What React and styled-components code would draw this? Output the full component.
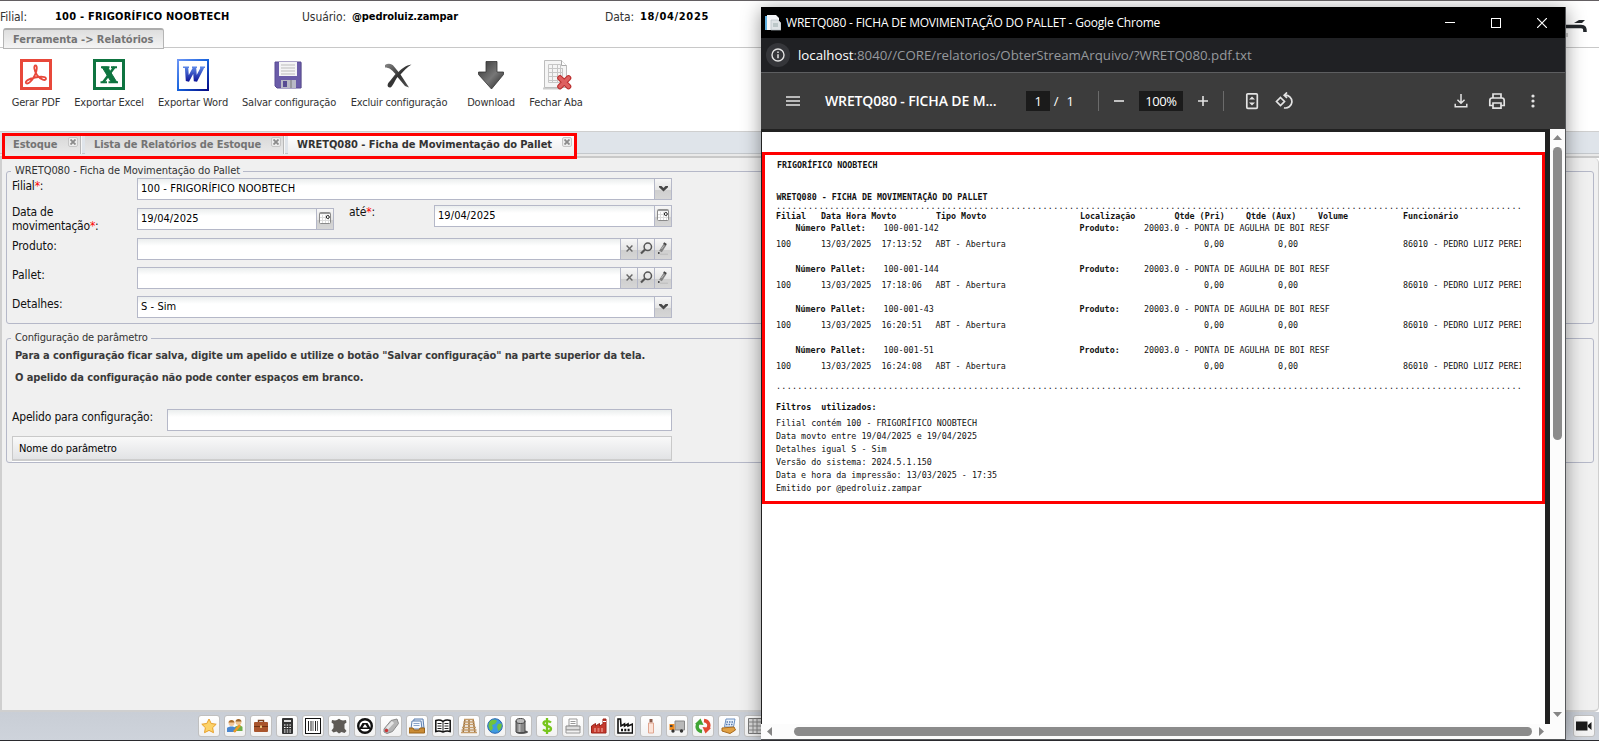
import React from 'react';
import styled, { createGlobalStyle, css } from 'styled-components';

const GlobalStyle = createGlobalStyle`
  * { box-sizing: border-box; }
  body { margin: 0; background: #fff; overflow: hidden; }
  svg { display: block; flex: none; }
`;

const ui = '"DejaVu Sans Condensed", "DejaVu Sans", sans-serif';
const segoe = '"Open Sans", "Noto Sans", sans-serif';

/* ---------- main window ---------- */

const Screen = styled.div`
  position: relative;
  display: flex;
  flex-direction: column;
  width: 1599px;
  height: 741px;
  overflow: hidden;
  background: #fff;
  border-top: 1px solid #635f62;
  border-bottom: 1px solid #2a2a2e;
  font: 12px/14px ${ui};
  color: #111;
`;

const Header = styled.div`
  display: flex;
  height: 27px;
  padding-top: 9px;
  white-space: pre;
`;

const HeaderLabel = styled.span`
  width: ${(p) => p.$w}px;
  letter-spacing: -0.07px;
  color: #333;
`;

const HeaderValue = styled.b`
  width: ${(p) => p.$w}px;
  font-size: 11px;
  letter-spacing: ${(p) => p.$ls}px;
  color: #000;
`;

const MenuTabs = styled.div`
  display: flex;
  height: 20px;
  padding-left: 3px;
  border-bottom: 1px solid #c8c8c8;
`;

const MenuTab = styled.div`
  height: 21px;
  width: 161px;
  padding: 3px 0 0 9px;
  border: 1px solid #b5b5b5;
  border-width: 2px 1px 1px;
  border-top-color: #adadad;
  border-radius: 3px 3px 0 0;
  background: linear-gradient(#dedede, #f4f4f4);
  font-size: 11px;
  font-weight: 700;
  letter-spacing: -0.027px;
  color: #747474;
  white-space: nowrap;
`;

const Toolbar = styled.div`
  display: flex;
  height: 84px;
  padding: 11px 0 0 11px;
  border-bottom: 1px solid #cfcfcf;
`;

const Tool = styled.div`
  display: flex;
  flex-direction: column;
  align-items: center;
  width: ${(p) => p.$w}px;
  margin-right: ${(p) => p.$gap}px;
  font-size: 11px;
  letter-spacing: ${(p) => p.$ls ?? -0.2}px;
  color: #333;
  white-space: nowrap;
  svg { margin-bottom: 5px; }
`;

const TabStrip = styled.div`
  display: flex;
  height: 26px;
  padding: 3px 0 0 3px;
  background: linear-gradient(#dfe4ea 0 21px, #c4c8cc 21px 22px, #e9e9e9 22px 24px, #c9c9c9 24px);
`;

const Tab = styled.div`
  display: flex;
  justify-content: space-between;
  width: ${(p) => p.$w}px;
  height: ${(p) => (p.$active ? 20 : 19)}px;
  margin-right: 4px;
  padding: 3px 2px 0 ${(p) => p.$pl ?? 9}px;
  border-right: 1px solid ${(p) => (p.$active ? 'transparent' : '#b8b8b8')};
  box-shadow: ${(p) => (p.$active ? 'none' : '1px 0 #f6f6f6')};
  background: ${(p) => (p.$active ? 'linear-gradient(#fff, #ececec)' : 'linear-gradient(#d8d8d8, #e9e9e9)')};
  font-size: 11px;
  font-weight: 700;
  letter-spacing: ${(p) => p.$ls}px;
  color: ${(p) => (p.$active ? '#333' : '#747474')};
  white-space: nowrap;
`;

const CloseBox = styled.span`
  display: flex;
  align-items: center;
  justify-content: center;
  width: 10px;
  height: 10px;
  margin-top: -1px;
  border: 1px solid #c6c6c6;
  border-radius: 2px;
  background: #ececec;
`;

const Panel = styled.div`
  flex: 1;
  padding: 6px 4px 0 4px;
  border: 2px solid #cfcfcf;
  border-width: 0 1px 2px 2px;
  border-radius: 0 5px 5px 0;
  background: #f0f0f0;
`;

const Group = styled.fieldset`
  margin: 0 0 ${(p) => p.$mb || 0}px;
  height: ${(p) => p.$h}px;
  padding: 0 0 0 5px;
  border: 1px solid #b5b8c8;
  border-radius: 3px;
`;

const Legend = styled.legend`
  margin-left: -1px;
  padding: 0 3px 0 4px;
  font-size: 11px;
  letter-spacing: ${(p) => p.$ls}px;
  color: #333;
`;

const FormRow = styled.div`
  display: flex;
  height: ${(p) => p.$h}px;
  padding-top: ${(p) => p.$pt || 0}px;
`;

const Label = styled.label`
  width: ${(p) => p.$w}px;
  margin-top: ${(p) => p.$mt || 0}px;
  letter-spacing: ${(p) => p.$ls ?? -0.22}px;
  color: #111;
  i { color: #f00; font-style: normal; }
`;

const Field = styled.div`
  display: flex;
  flex: none;
  width: ${(p) => p.$w}px;
  height: 22px;
  margin: ${(p) => p.$mt || 0}px ${(p) => p.$mr || 0}px 0 0;
  border: 1px solid #b5b8c8;
  background: linear-gradient(#ebeeee, #fff 7px);
  font-size: 11px;
  line-height: 20px;
  letter-spacing: ${(p) => p.$ls ?? 0.07}px;
  color: #000;
`;

const FieldText = styled.span`
  flex: 1;
  padding-left: 3px;
`;

const Trigger = styled.span`
  display: flex;
  justify-content: center;
  width: 17px;
  padding-top: ${(p) => p.$pt}px;
  border-left: 1px solid #b5b8c8;
  background: linear-gradient(#f7f7f7, #e4e4e4 55%, #cfcfcf 56%, #d6d6d6);
`;

const Note = styled.p`
  margin: 0 0 8px;
  padding-left: 3px;
  font-size: 11px;
  font-weight: 700;
  letter-spacing: ${(p) => p.$ls}px;
  color: #3a3a3a;
`;

const GridHeader = styled.div`
  width: 660px;
  height: 25px;
  padding: 5px 0 0 6px;
  border: 1px solid #c9c9c9;
  border-bottom: 2px solid #cdcdcd;
  background: linear-gradient(#f9f9f9, #e2e3e5);
  box-shadow: 0 1px #fff;
  font-size: 11px;
  letter-spacing: -0.12px;
  color: #000;
`;

const Dock = styled.div`
  display: flex;
  gap: 4px;
  height: 28px;
  padding: 3px 4px 0 198px;
  background: linear-gradient(#c9ced6, #ced3db);
`;

const DockButton = styled.span`
  display: flex;
  align-items: center;
  justify-content: center;
  width: 22px;
  height: 22px;
  border: 1px solid #c0c0c0;
  border-radius: 3px;
  background: linear-gradient(#fff, #f1f1f1);
  ${(p) => p.$end && css`margin-left: auto;`}
`;

const Highlight = styled.div`
  position: absolute;
  left: ${(p) => p.$x}px;
  top: ${(p) => p.$y}px;
  width: ${(p) => p.$w}px;
  height: ${(p) => p.$h}px;
  border: 3px solid #f00;
`;

const Faucet = styled.div`
  position: absolute;
  left: 1564px;
  top: 17px;
`;

/* ---------- report window ---------- */

const Browser = styled.div`
  position: absolute;
  left: 761px;
  top: 6px;
  display: flex;
  flex-direction: column;
  width: 805px;
  height: 733px;
  border-right: 1px solid #55575a;
  border-bottom: 1px solid #55575a;
  background: #fdfdfd;
  box-shadow: 0 3px 18px rgba(0, 0, 0, 0.42);
  font-family: ${segoe};
  color: #fff;
`;

const TitleBar = styled.div`
  display: flex;
  align-items: center;
  height: 31px;
  padding-left: 4px;
  background: #000;
  font-size: 12px;
  letter-spacing: -0.19px;
  white-space: nowrap;
`;

const TitleText = styled.span`
  flex: 1;
  padding: 0 0 0 5px;
`;

const WindowButton = styled.span`
  display: flex;
  justify-content: center;
  width: 46px;
`;

const AddressBar = styled.div`
  display: flex;
  align-items: center;
  gap: 8px;
  height: 35px;
  padding-left: 5px;
  border-bottom: 1px solid #5d5e60;
  background: #202124;
  font-size: 13.3px;
  letter-spacing: -0.02px;
  color: #96999d;
  b { font-weight: 400; color: #fff; }
`;

const InfoDisc = styled.span`
  display: flex;
  align-items: center;
  justify-content: center;
  width: 24px;
  height: 24px;
  border-radius: 50%;
  background: #35363a;
`;

const PdfBar = styled.div`
  display: flex;
  align-items: center;
  height: 56px;
  padding-right: 14px;
  background: #3c3c3c;
  font-size: 13px;
  letter-spacing: -0.4px;
`;

const Slot = styled.span`
  display: flex;
  justify-content: center;
  width: ${(p) => p.$w}px;
`;

const PdfTitle = styled.span`
  width: 201px;
  font-size: 14px;
  font-weight: 600;
  letter-spacing: -0.14px;
  white-space: nowrap;
`;

const DarkBox = styled.span`
  width: ${(p) => p.$w}px;
  height: 20px;
  background: #1b1b1b;
  line-height: 20px;
  text-align: center;
`;

const Divider = styled.span`
  width: 1px;
  height: 20px;
  margin-left: ${(p) => p.$ml || 0}px;
  margin-right: ${(p) => p.$mr || 0}px;
  background: #6b6b6b;
`;

const Grow = styled.span`
  flex: 1;
`;

const Viewer = styled.div`
  display: flex;
  flex: 1;
  background: #212121;
`;

const Page = styled.div`
  width: 783px;
  margin: 3px 5px 0 1px;
  padding: 27px 24px 0 14px;
  background: #fff;
  font: 8.35px/12px "DejaVu Sans Mono", monospace;
  color: #111;
  overflow: hidden;
`;

const Line = styled.div`
  display: flex;
  height: ${(p) => p.$h || 12}px;
  line-height: ${(p) => p.$h || 12}px;
  margin-top: ${(p) => p.$mt || 0}px;
  padding-left: ${(p) => p.$pl || 0}px;
  overflow: ${(p) => (p.$clip ? 'hidden' : 'visible')};
  white-space: pre;
  font-weight: ${(p) => (p.$bold ? 700 : 400)};
`;

const Cell = styled.span`
  flex: none;
  width: ${(p) => p.$w}px;
  font-weight: ${(p) => (p.$bold ? 700 : 'inherit')};
`;

const Dots = styled(Line)`
  letter-spacing: 0.306px;
  color: #222;
`;

const VScroll = styled.div`
  display: flex;
  flex-direction: column;
  align-items: center;
  width: 15px;
  padding: 6px 0 7px;
  background: #fcfcfc;
`;

const VThumb = styled.span`
  width: 9px;
  height: 293px;
  margin: 7px 0 auto;
  border-radius: 5px;
  background: #8b8b8b;
`;

const HScroll = styled.div`
  display: flex;
  align-items: center;
  height: 15px;
  padding: 0 21px 0 6px;
  background: #fcfcfc;
`;

const HThumb = styled.span`
  flex: 1;
  height: 9px;
  margin: 0 7px 0 22px;
  border-radius: 5px;
  background: #8b8b8b;
`;

/* ---------- drawings ---------- */

const PdfIcon = () => (
  <svg width="32" height="32" viewBox="0 0 32 32">
    <rect x="1.5" y="1.5" width="29" height="28" fill="#fff" stroke="#e8483a" strokeWidth="3" />
    <path d="M6 24c-1.500-2 4-4.500 9-5.500 6-1.200 11-1 11 1.200 0 2.600-5.500 1.200-9-3.700-3-4.300-3.500-9.500-1.500-9.500s1.700 5-.8 10C12.200 21.500 8 26 6 24z" fill="none" stroke="#e8483a" strokeWidth="1.800" />
  </svg>
);
const ExcelIcon = () => (
  <svg width="32" height="32" viewBox="0 0 32 32">
    <rect x="1.500" y="1.500" width="29" height="28" fill="#fff" stroke="#0e7440" strokeWidth="3" />
    <path d="M8 8.200h8.500M18 8.200h6M7.500 23.200h6.500M15.500 23.200h9.500" stroke="#0e7440" strokeWidth="2" />
    <path d="M9 8l9.500 15.500h5.500L14.500 8z" fill="#0e7440" stroke="#0e7440" />
    <path d="M21.500 8L10 23.500" stroke="#0e7440" strokeWidth="2.600" />
  </svg>
);
const WordIcon = () => (
  <svg width="32" height="32" viewBox="0 0 32 32">
    <defs>
      <linearGradient id="wb" x1="0" y1="0" x2="1" y2="1"><stop offset="0" stopColor="#6b95f5" /><stop offset=".5" stopColor="#1662dc" /><stop offset="1" stopColor="#050b86" /></linearGradient>
      <linearGradient id="wl" x1="0" y1="0" x2="0" y2="1"><stop offset="0" stopColor="#5b86e6" /><stop offset="1" stopColor="#10189a" /></linearGradient>
    </defs>
    <rect x="1" y="1" width="30" height="30" fill="#fff" stroke="url(#wb)" strokeWidth="2" />
    <path d="M6 8.200h6M15 8.200h5M23 8.200h5" stroke="#5b86e6" strokeWidth="1.600" />
    <path d="M9.500 8L10.500 22 17.500 9 18.500 22 25.500 8.500" fill="none" stroke="url(#wl)" strokeWidth="3.400" strokeLinejoin="bevel" />
  </svg>
);
const SaveIcon = () => (
  <svg width="32" height="32" viewBox="0 0 32 32">
    <path d="M4 4h25v25H6z" fill="#000" opacity=".18" />
    <path d="M2 3h26v26H4l-2-2z" fill="#6a5ca8" stroke="#584b93" />
    <rect x="6" y="3" width="18" height="14" fill="#f4f4f6" />
    <path d="M8 6h14M8 9h14M8 12h14M8 15h14" stroke="#bbb" />
    <path d="M8 21h15v8H8z" fill="#b9b9c6" /><path d="M10 22h4v6h-4z" fill="#584b93" /><path d="M18 21v8" stroke="#777" />
  </svg>
);
const DeleteIcon = () => (
  <svg width="32" height="32" viewBox="0 0 32 32">
    <defs><linearGradient id="dx" x1="0" y1="0" x2="1" y2="1"><stop offset="0" stopColor="#888" /><stop offset=".5" stopColor="#333" /><stop offset="1" stopColor="#555" /></linearGradient></defs>
    <path d="M2 6c3-2 7-1.500 9 1.500l4.500 5.500c4-4 7-6.500 13-7.500-4.500 3-8 6.500-11 10l8.500 13-4-1.500-7.500-9c-3 4-4 8.500-7 10.500-4 .5-3.500-4-.5-6.500l5.500-7C8.500 10.500 6 8.500 2 8.500z" fill="url(#dx)" />
  </svg>
);
const DownloadIcon = () => (
  <svg width="32" height="32" viewBox="0 0 32 32">
    <defs><linearGradient id="dl" x1="0" y1="0" x2="1" y2="1"><stop offset="0" stopColor="#333" /><stop offset=".55" stopColor="#777" /><stop offset="1" stopColor="#222" /></linearGradient></defs>
    <path d="M11 2.500h11V13h6.500v2.500L16.500 30 3.500 15.500V13H11z" fill="url(#dl)" stroke="#333" strokeWidth=".8" />
  </svg>
);
const CloseTabIcon = () => (
  <svg width="32" height="32" viewBox="0 0 32 32">
    <path d="M3 29.500h18" stroke="#ccc" strokeWidth="2" />
    <path d="M4.500 1.500h17l5 5v22h-22z" fill="#f5f5f5" stroke="#bdbdbd" />
    <path d="M21.500 1.500v5h5" fill="#fff" stroke="#aaa" />
    <path d="M8.500 5.500h12v18h-12zM8 9.500h15M8 13.500h15M8 17.500h12M8 21.500h10M12.500 5v19M17.500 5v19M22.500 9v8" fill="none" stroke="#c6c6c6" />
    <path d="M20 19l8.500 8.500M28.500 19L20 27.500" stroke="#b92c2c" strokeWidth="5.600" strokeLinecap="round" />
    <path d="M20 19l8.500 8.500M28.500 19L20 27.500" stroke="#de6060" strokeWidth="3.600" strokeLinecap="round" />
  </svg>
);
const SmallX = ({ size = 6, color = '#8a8a8a', w = 1.8 }) => (
  <svg width={size} height={size} viewBox="0 0 6 6"><path d="M.5.500l5 5M5.500.500l-5 5" stroke={color} strokeWidth={w} /></svg>
);
const Chevron = () => (
  <svg width="9" height="6" viewBox="0 0 9 6"><path d="M0 0h2.500l2 2 2-2H9v1.200L4.500 5.500 0 1.200z" fill="#484848" /></svg>
);
const CalendarIcon = () => (
  <svg width="12" height="12" viewBox="0 0 12 12">
    <rect x=".5" y=".5" width="11" height="11" rx="1" fill="#fff" stroke="#8a8a8a" />
    <path d="M1 1.300h10" stroke="#999" strokeWidth="1.600" /><path d="M3.500 3v8M6.500 3v8M9.500 3v8M1 5.500h10M1 8.500h10" stroke="#ddd" />
    <circle cx="8.800" cy="5" r="1.500" fill="#fff" stroke="#222" />
  </svg>
);
const SearchIcon = () => (
  <svg width="13" height="13" viewBox="0 0 13 13"><circle cx="7.800" cy="4.800" r="3.700" fill="#e8e8e8" stroke="#555" strokeWidth="1.500" /><path d="M5 7.500L1 11.500" stroke="#555" strokeWidth="2.200" /></svg>
);
const PencilIcon = () => (
  <svg width="12" height="13" viewBox="0 0 12 13"><path d="M3 12.200h8" stroke="#bbb" /><path d="M3.500 9.500L8 2.500" stroke="#808080" strokeWidth="3.200" /><path d="M7.500 2.700L8.500 1.200" stroke="#444" strokeWidth="3.200" /><path d="M4.500 7l2.500-3.500" stroke="#bbb" /><circle cx="1.800" cy="11" r=".9" fill="#333" /></svg>
);

const dockDrawings = [
  <path key="star" d="M8 1l2.200 4.500 5 .7-3.600 3.500.9 5L8 12.400l-4.500 2.300.9-5L.8 6.200l5-.7z" fill="#fcd36a" stroke="#e7a02c" />,
  <g key="users"><circle cx="11.500" cy="4" r="3" fill="#f0c490" /><path d="M8.500 3.500C9 0 14 0 14.500 3.500z" fill="#99622a" /><path d="M8 13V9c2-2 6-2 7.500 0v4z" fill="#6fae48" /><circle cx="4.500" cy="5" r="3" fill="#f2c79a" /><path d="M1.500 4.500C2 1 7 1 7.500 4.500z" fill="#a96a2a" /><path d="M0 14v-4c2-2 7-2 9 0v4z" fill="#4a86cf" /><path d="M7 14l6-7" stroke="#ee9a24" strokeWidth="2.500" /></g>,
  <g key="briefcase"><path d="M5.500 4V2.500h5V4" fill="none" stroke="#7a4020" strokeWidth="1.400" /><rect x="1" y="4" width="14" height="10" rx="1" fill="#a9552d" /><path d="M1 8.500h14" stroke="#713312" /><rect x="7" y="7.500" width="2" height="2.500" fill="#e9c27a" /></g>,
  <g key="calc"><rect x="3" y="0" width="11" height="16" rx="1" fill="#333" /><path d="M5 3h7" stroke="#ddd" strokeWidth="2" /><path d="M5 7h7M5 9.500h7M5 12h7M5 14h7" stroke="#fff" strokeWidth="1.200" strokeDasharray="1.500 1.200" /></g>,
  <g key="barcode"><rect x=".5" y=".5" width="15" height="15" fill="#fff" stroke="#111" /><path d="M3.500 3v10M6 3v10M10.500 3v10" stroke="#222" /><path d="M8 3v10M12.500 3v10" stroke="#222" strokeWidth=".7" /></g>,
  <path key="hide" d="M1 2l3 .5L6 2l2-1.200L10 2l2 .5 3-.5.500 2.500-2 1.500v4.500l2 2.500-2 2-3-1L8 15.500 5.500 13.500l-3 1-2-2 2-2.500V6L.5 4.500z" fill="#5f5b56" />,
  <g key="seal"><circle cx="8" cy="8" r="6.800" fill="#fff" stroke="#111" strokeWidth="2.400" /><path d="M2 11l3.500-6h5L14 11z" fill="#111" /><path d="M5.500 9.500L8 6l2.500 3.500z" fill="#fff" /></g>,
  <g key="tag"><path d="M1 11L8 2.500 14 1l1.500 4.500-6 8L4 15.500 1 14z" fill="#b5b5b5" stroke="#8a8a8a" /><path d="M4 10.500L10 4" stroke="#e5e5e5" strokeWidth="3" /><circle cx="3.500" cy="12.500" r="1.700" fill="#c33" /></g>,
  <g key="tray"><path d="M5 1h9l1 9H4z" fill="#dfe9f8" stroke="#5d7fae" /><path d="M3 3h9l1 8H2z" fill="#f5f9ff" stroke="#5d7fae" /><path d="M4.500 5.500h6M4.500 7.500h6" stroke="#8aa4c8" /><path d="M0 10h4l1 2h5l1-2h4.500v5H0z" fill="#c98b35" stroke="#9a6318" /></g>,
  <g key="book"><path d="M.8 2.500c3-1 5-.5 7.200.8 2.200-1.300 4.200-1.800 7.200-.8v11c-3-1-5-.5-7.200.5-2.200-1-4.200-1.500-7.200-.5z" fill="#fff" stroke="#111" strokeWidth="1.500" /><path d="M8 3v11M2.500 5.500h4M2.500 8h4M2.500 10.500h4M9.500 5.500h4M9.500 8h4M9.500 10.500h4" stroke="#222" /></g>,
  <g key="pallet"><path d="M4 1L2 15M8 1v14M12 1l2 14" stroke="#8f6537" strokeWidth="1.500" /><path d="M3 1.500h10M2.500 4h11M2 6.500h12M1 9.500h14M.5 12h15M0 14.500h16" stroke="#c49b68" strokeWidth="1.500" /></g>,
  <g key="globe"><circle cx="8" cy="8" r="7.300" fill="#3f9ae0" stroke="#2764ae" /><path d="M3 3c3-2 6-1.500 7 0L8 6 5 7l1 3-2 3C1 10 1 6 3 3zM11 6l3.500-.5c.8 3-.5 6-3 7.500L10 9z" fill="#71c33c" /></g>,
  <g key="barrel"><ellipse cx="9" cy="14" rx="6" ry="1.800" fill="#555" /><path d="M3 3h9v11H3z" fill="#888" /><ellipse cx="7.500" cy="3" rx="4.500" ry="2.500" fill="#bbb" stroke="#444" /><path d="M3 3v11c1 1.500 8 1.500 9 0V3" fill="none" stroke="#444" /><path d="M6.500 6v8" stroke="#bbb" strokeWidth="2" /></g>,
  <path key="dollar" d="M12 4.500C10 2.500 4.500 2.500 4.500 5.300S12 7.700 12 10.800 6 13.500 4 11.500M8 0v16" fill="none" stroke="#76c51c" strokeWidth="2.300" />,
  <g key="printer"><path d="M4 1h8v7H4z" fill="#fff" stroke="#999" /><path d="M5.500 3.500h5M5.500 5.500h5" stroke="#999" /><path d="M1 8h14v4H1z" fill="#ddd" stroke="#888" /><path d="M1 12h14v3H1z" fill="#f1f1f1" stroke="#999" /></g>,
  <g key="factory-red"><path d="M.5 15V8l4-2.500V8l4-2.500V8L12 6V1h3v14z" fill="#c5392c" stroke="#9c241b" /><path d="M3 11h9M3 13h9" stroke="#f5b8ae" strokeDasharray="2 1.500" /><path d="M12 3.500h3" stroke="#fff" /></g>,
  <g key="factory"><path d="M1 15V1h2.500l.5 7 3.500-2v2L11 6v2l4.500-2v9z" fill="#fff" stroke="#111" strokeWidth="1.600" /><path d="M4 12h9" stroke="#111" strokeWidth="2.600" strokeDasharray="2 1.300" /></g>,
  <g key="bottle"><path d="M6.500 1h3v3.500h-3z" fill="#8a5a4a" /><path d="M5.500 5h5v10h-5z" fill="#fbe3d8" stroke="#e0a58f" /></g>,
  <g key="truck"><path d="M6 3h9.500v9H6z" fill="#b9b9b9" stroke="#888" /><path d="M.5 6h5v6h-5z" fill="#f08a1d" /><path d="M1 7h2.500v2H1z" fill="#444" /><circle cx="4" cy="13" r="1.700" fill="#333" /><circle cx="12.500" cy="13" r="1.700" fill="#333" /></g>,
  <g key="sync"><path d="M7 13.500C2 13 1 8 3.500 5" fill="none" stroke="#3fa535" strokeWidth="3.400" /><path d="M0 6l5.500-5.500L8.500 7z" fill="#3fa535" /><path d="M9 2.500C14 3 15 8 12.500 11" fill="none" stroke="#e04a32" strokeWidth="3.400" /><path d="M16 10l-5.500 5.500L7.500 9z" fill="#e04a32" /></g>,
  <g key="register"><path d="M5 1h9l-1.500 8h-9z" fill="#eaf2fb" stroke="#6b8fc0" /><path d="M5.500 4h7M5 6.500h7" stroke="#567ab0" strokeWidth="1.300" strokeDasharray="1.500 1" /><path d="M1 10l12-1 1.500 3L9 15.500 1 13z" fill="#e2a144" stroke="#a86a1c" /></g>,
  <g key="table"><path d="M1.500.5h13v15h-13z" fill="#ddd" stroke="#777" /><path d="M1.500 4h13M1.500 8h13M1.500 12h13M6 .500v15M10 .500v15" stroke="#888" /></g>,
];

const DockIcon = ({ children }) => <svg width="16" height="16" viewBox="0 0 16 16">{children}</svg>;
const CameraIcon = () => (
  <svg width="16" height="16" viewBox="0 0 16 16"><path d="M0 3.500h11.500v9H0zM12 7l3.500-3v8L12 9z" fill="#1c1c1c" /></svg>
);
const FaucetIcon = () => (
  <svg width="24" height="20" viewBox="0 0 24 20"><path d="M0 8.500h17c3.500 0 4 1.500 4 5.500" fill="none" stroke="#23272b" strokeWidth="3.600" /><path d="M10 5l5-3h6l-3 3z" fill="#23272b" /><path d="M3 15v4" stroke="#999" /></svg>
);
const FileIcon = () => (
  <svg width="16" height="17" viewBox="0 0 16 17"><path d="M0 2h4v14H0z" fill="#5fb0e0" /><path d="M2 1h9l3 3v12H2z" fill="#f4f6f8" /><path d="M6 6h7l3 3v7H6z" fill="#dfe3e6" stroke="#b5bcc2" strokeWidth=".7" /><path d="M8 10h5M8 12h5" stroke="#9aa" /></svg>
);
const BarIcon = ({ children, size = 18 }) => (
  <svg width={size} height={size} viewBox="0 0 18 18" fill="none" stroke="#e3e3e3" strokeWidth="1.700">{children}</svg>
);
const ArrowMark = ({ w, h, d }) => <svg width={w} height={h} viewBox={`0 0 ${w} ${h}`}><path d={d} fill="#858585" /></svg>;

/* ---------- content ---------- */

const pallets = [
  { number: '100-001-142', time: '17:13:52', mt: 0 },
  { number: '100-001-144', time: '17:18:06', mt: 13 },
  { number: '100-001-43', time: '16:20:51', mt: 12 },
  { number: '100-001-51', time: '16:24:08', mt: 13 },
];

const filters = [
  'Filial contém 100 - FRIGORÍFICO NOOBTECH',
  'Data movto entre 19/04/2025 e 19/04/2025',
  'Detalhes igual S - Sim',
  'Versão do sistema: 2024.5.1.150',
  'Data e hora da impressão: 13/03/2025 - 17:35',
  'Emitido por @pedroluiz.zampar',
];

const dots = '.'.repeat(140);

function Lookup({ label }) {
  return (
    <FormRow $h={29}>
      <Label $w={125} $mt={1} $ls={-0.05}>{label}</Label>
      <Field $w={535}>
        <FieldText />
        <Trigger $pt={6}><SmallX size={7} color="#666" w={1.2} /></Trigger>
        <Trigger $pt={3}><SearchIcon /></Trigger>
        <Trigger $pt={3}><PencilIcon /></Trigger>
      </Field>
    </FormRow>
  );
}

function ReportWindow() {
  return (
    <Browser>
      <TitleBar>
        <FileIcon />
        <TitleText>WRETQ080 - FICHA DE MOVIMENTAÇÃO DO PALLET - Google Chrome</TitleText>
        <WindowButton><svg width="10" height="10"><path d="M0 4.500h10" stroke="#fff" /></svg></WindowButton>
        <WindowButton><svg width="10" height="10"><rect x=".5" y=".5" width="9" height="9" fill="none" stroke="#fff" /></svg></WindowButton>
        <WindowButton><svg width="10" height="10"><path d="M0 0l10 10M10 0L0 10" stroke="#fff" strokeWidth="1.200" /></svg></WindowButton>
      </TitleBar>
      <AddressBar>
        <InfoDisc>
          <svg width="14" height="14" viewBox="0 0 14 14"><circle cx="7" cy="7" r="6" fill="none" stroke="#e3e3e3" strokeWidth="1.400" /><path d="M7 6.200v4M7 3.500v1.500" stroke="#e3e3e3" strokeWidth="1.500" /></svg>
        </InfoDisc>
        <span><b>localhost</b>:8040//CORE/relatorios/ObterStreamArquivo/?WRETQ080.pdf.txt</span>
      </AddressBar>
      <PdfBar>
        <Slot $w={64}><svg width="14" height="10"><path d="M0 1h14M0 5h14M0 9h14" stroke="#e3e3e3" strokeWidth="1.700" /></svg></Slot>
        <PdfTitle>WRETQ080 - FICHA DE M...</PdfTitle>
        <DarkBox $w={24}>1</DarkBox>
        <Slot $w={12}>/</Slot>
        <Slot $w={16}>1</Slot>
        <Divider $ml={20} />
        <Slot $w={40}><svg width="10" height="10"><path d="M0 5h10" stroke="#e3e3e3" strokeWidth="1.600" /></svg></Slot>
        <DarkBox $w={44}>100%</DarkBox>
        <Slot $w={40}><svg width="10" height="10"><path d="M0 5h10M5 0v10" stroke="#e3e3e3" strokeWidth="1.600" /></svg></Slot>
        <Divider $mr={12} />
        <Slot $w={32}>
          <BarIcon><rect x="3.800" y="1.800" width="10.500" height="14.500" rx="1" /><path d="M6 7.500l3-3 3 3zM6 10.500l3 3 3-3z" fill="#e3e3e3" stroke="none" /></BarIcon>
        </Slot>
        <Slot $w={32}>
          <BarIcon><path d="M5.500 5.500L9.500 9.500 5.500 13.500 1.500 9.500z" /><path d="M10 3.200a6.400 6.400 0 1 1-1 12.600M12 .500L9.200 3.300 12 6" /></BarIcon>
        </Slot>
        <Grow />
        <Slot $w={36}>
          <BarIcon size={16}><path d="M9 1v10M5 7.500l4 4 4-4M2.500 12v3.500h13V12" /></BarIcon>
        </Slot>
        <Slot $w={36}>
          <BarIcon><path d="M5 6V2h8v4M5 13.500H1.800v-5c0-1.500 1-2.500 2.200-2.500h10c1.200 0 2.200 1 2.200 2.500v5H13M5 11h8v5.200H5z" /></BarIcon>
        </Slot>
        <Slot $w={36}>
          <svg width="4" height="14" fill="#e3e3e3"><circle cx="2" cy="2" r="1.600" /><circle cx="2" cy="7" r="1.600" /><circle cx="2" cy="12" r="1.600" /></svg>
        </Slot>
      </PdfBar>
      <Viewer>
        <Page>
          <Line $bold $pl={1}>FRIGORÍFICO NOOBTECH</Line>
          <Line $bold $mt={20} $pl={0.5}>WRETQ080 - FICHA DE MOVIMENTAÇÃO DO PALLET</Line>
          <Dots $h={7}>{dots}</Dots>
          <Line $bold>
            <Cell $w={45}>Filial</Cell>
            <Cell $w={115}>Data Hora Movto</Cell>
            <Cell $w={144}>Tipo Movto</Cell>
            <Cell $w={94.500}>Localização</Cell>
            <Cell $w={71.500}>Qtde (Pri)</Cell>
            <Cell $w={72}>Qtde (Aux)</Cell>
            <Cell $w={85}>Volume</Cell>
            <Cell>Funcionário</Cell>
          </Line>
          {pallets.map((p) => (
            <React.Fragment key={p.number}>
              <Line $mt={p.mt} $pl={19.500}>
                <Cell $w={88} $bold>Número Pallet:</Cell>
                <Cell $w={196}>{p.number}</Cell>
                <Cell $w={64.500} $bold>Produto:</Cell>
                <Cell>20003.0 - PONTA DE AGULHA DE BOI RESF</Cell>
              </Line>
              <Line $mt={4} $clip>
                <Cell $w={45}>100</Cell>
                <Cell $w={60.500}>13/03/2025</Cell>
                <Cell $w={54}>{p.time}</Cell>
                <Cell $w={268.500}>ABT - Abertura</Cell>
                <Cell $w={74}>0,00</Cell>
                <Cell $w={125}>0,00</Cell>
                <Cell>86010 - PEDRO LUIZ PEREI</Cell>
              </Line>
            </React.Fragment>
          ))}
          <Dots $h={7} $mt={11}>{dots}</Dots>
          <Line $bold $mt={11}>Filtros  utilizados:</Line>
          <Line $mt={4} $h={13}>{filters[0]}</Line>
          {filters.slice(1).map((f) => <Line key={f} $h={13}>{f}</Line>)}
        </Page>
        <VScroll>
          <ArrowMark w={9} h={5} d="M0 5L4.500 0 9 5z" />
          <VThumb />
          <ArrowMark w={9} h={5} d="M0 0L4.500 5 9 0z" />
        </VScroll>
      </Viewer>
      <HScroll>
        <ArrowMark w={5} h={9} d="M5 0L0 4.500 5 9z" />
        <HThumb />
        <ArrowMark w={5} h={9} d="M0 0L5 4.500 0 9z" />
      </HScroll>
    </Browser>
  );
}

export default function App() {
  return (
    <Screen>
      <GlobalStyle />
      <Header>
        <HeaderLabel $w={55}>Filial:</HeaderLabel>
        <HeaderValue $w={247} $ls={0.22}>100 - FRIGORÍFICO NOOBTECH</HeaderValue>
        <HeaderLabel $w={50}>Usuário:</HeaderLabel>
        <HeaderValue $w={253} $ls={-0.07}>@pedroluiz.zampar</HeaderValue>
        <HeaderLabel $w={35}>Data:</HeaderLabel>
        <HeaderValue $w={80} $ls={0.67}>18/04/2025</HeaderValue>
      </Header>
      <MenuTabs><MenuTab>Ferramenta -&gt; Relatórios</MenuTab></MenuTabs>
      <Toolbar>
        <Tool $w={50} $gap={13}><PdfIcon />Gerar PDF</Tool>
        <Tool $w={70} $gap={14} $ls={-0.17}><ExcelIcon />Exportar Excel</Tool>
        <Tool $w={70} $gap={14} $ls={-0.06}><WordIcon />Exportar Word</Tool>
        <Tool $w={94} $gap={14} $ls={-0.236}><SaveIcon />Salvar configuração</Tool>
        <Tool $w={98} $gap={19}><DeleteIcon />Excluir configuração</Tool>
        <Tool $w={48} $gap={14}><DownloadIcon />Download</Tool>
        <Tool $w={54} $gap={0}><CloseTabIcon />Fechar Aba</Tool>
      </Toolbar>
      <TabStrip>
        <Tab $w={78} $pl={10} $ls={-0.1}>Estoque<CloseBox><SmallX /></CloseBox></Tab>
        <Tab $w={199} $ls={-0.11}>Lista de Relatórios de Estoque<CloseBox><SmallX /></CloseBox></Tab>
        <Tab $active $w={287} $ls={-0.035}>WRETQ080 - Ficha de Movimentação do Pallet<CloseBox><SmallX /></CloseBox></Tab>
      </TabStrip>
      <Panel>
        <Group $h={160} $mb={7}>
          <Legend $ls={-0.07}>WRETQ080 - Ficha de Movimentação do Pallet</Legend>
          <FormRow $h={27}>
            <Label $w={125} $mt={1}>Filial<i>*</i>:</Label>
            <Field $w={535}><FieldText>100 - FRIGORÍFICO NOOBTECH</FieldText><Trigger $pt={7}><Chevron /></Trigger></Field>
          </FormRow>
          <FormRow $h={33}>
            <Label $w={125}>Data de movimentação<i>*</i>:</Label>
            <Field $w={197} $mt={3} $mr={15}><FieldText>19/04/2025</FieldText><Trigger $pt={3}><CalendarIcon /></Trigger></Field>
            <Label $w={85} $ls={-0.1}>até<i>*</i>:</Label>
            <Field $w={238}><FieldText>19/04/2025</FieldText><Trigger $pt={3}><CalendarIcon /></Trigger></Field>
          </FormRow>
          <Lookup label="Produto:" />
          <Lookup label="Pallet:" />
          <FormRow $h={24}>
            <Label $w={125} $mt={1} $ls={-0.1}>Detalhes:</Label>
            <Field $w={535}><FieldText>S - Sim</FieldText><Trigger $pt={7}><Chevron /></Trigger></Field>
          </FormRow>
        </Group>
        <Group $h={132}>
          <Legend $ls={-0.15}>Configuração de parâmetro</Legend>
          <FormRow $h={64} $pt={4}>
            <div>
              <Note $ls={-0.106}>Para a configuração ficar salva, digite um apelido e utilize o botão "Salvar configuração" na parte superior da tela.</Note>
              <Note $ls={-0.11}>O apelido da configuração não pode conter espaços em branco.</Note>
            </div>
          </FormRow>
          <FormRow $h={27}>
            <Label $w={155} $mt={1} $ls={-0.17}>Apelido para configuração:</Label>
            <Field $w={505} />
          </FormRow>
          <GridHeader>Nome do parâmetro</GridHeader>
        </Group>
      </Panel>
      <Dock>
        {dockDrawings.map((d) => <DockButton key={d.key}><DockIcon>{d}</DockIcon></DockButton>)}
        <DockButton $end><CameraIcon /></DockButton>
      </Dock>
      <Faucet><FaucetIcon /></Faucet>
      <Highlight $x={2} $y={132} $w={575} $h={26} />
      <ReportWindow />
      <Highlight $x={762} $y={151} $w={783} $h={352} />
    </Screen>
  );
}
